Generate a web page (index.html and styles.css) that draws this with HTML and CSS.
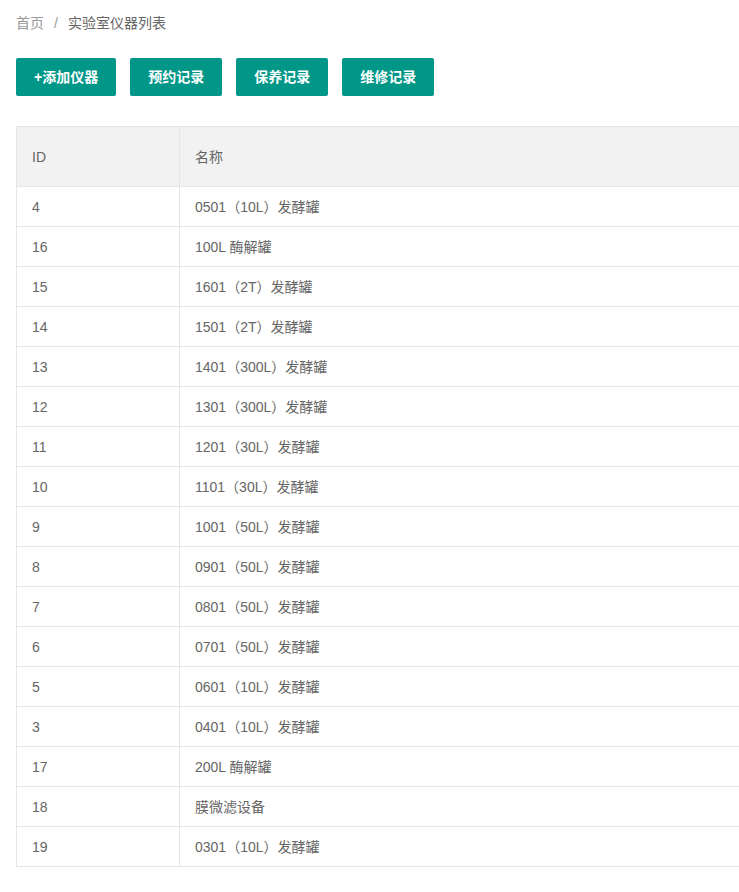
FILE: index.html
```html
<!DOCTYPE html>
<html lang="zh-CN">
<head>
<meta charset="utf-8">
<title>实验室仪器列表</title>
<link rel="stylesheet" href="styles.css">
</head>
<body>
<div class="page">
  <div class="breadcrumb">
    <a class="crumb">首页</a><span class="sep">/</span><span class="crumb current">实验室仪器列表</span>
  </div>
  <div class="toolbar">
    <button class="btn">+添加仪器</button>
    <button class="btn">预约记录</button>
    <button class="btn">保养记录</button>
    <button class="btn">维修记录</button>
  </div>
  <div class="table-wrap">
    <table class="grid">
      <colgroup><col class="c-id"><col class="c-name"></colgroup>
      <thead>
        <tr><th>ID</th><th>名称</th></tr>
      </thead>
      <tbody>
        <tr><td>4</td><td>0501（10L）发酵罐</td></tr>
        <tr><td>16</td><td>100L 酶解罐</td></tr>
        <tr><td>15</td><td>1601（2T）发酵罐</td></tr>
        <tr><td>14</td><td>1501（2T）发酵罐</td></tr>
        <tr><td>13</td><td>1401（300L）发酵罐</td></tr>
        <tr><td>12</td><td>1301（300L）发酵罐</td></tr>
        <tr><td>11</td><td>1201（30L）发酵罐</td></tr>
        <tr><td>10</td><td>1101（30L）发酵罐</td></tr>
        <tr><td>9</td><td>1001（50L）发酵罐</td></tr>
        <tr><td>8</td><td>0901（50L）发酵罐</td></tr>
        <tr><td>7</td><td>0801（50L）发酵罐</td></tr>
        <tr><td>6</td><td>0701（50L）发酵罐</td></tr>
        <tr><td>5</td><td>0601（10L）发酵罐</td></tr>
        <tr><td>3</td><td>0401（10L）发酵罐</td></tr>
        <tr><td>17</td><td>200L 酶解罐</td></tr>
        <tr><td>18</td><td>膜微滤设备</td></tr>
        <tr><td>19</td><td>0301（10L）发酵罐</td></tr>
      </tbody>
    </table>
  </div>
</div>
</body>
</html>
```
FILE: styles.css
```css
html, body {
  margin: 0;
  padding: 0;
  background: #fff;
  overflow: hidden;
}
body {
  font-family: "Liberation Sans", "Noto Sans CJK SC", sans-serif;
  font-size: 14px;
  color: #666;
}
.page {
  padding: 15px 0 0 16px;
}
.breadcrumb {
  line-height: 16px;
  height: 16px;
}
.crumb {
  color: #999;
}
.crumb.current {
  color: #666;
}
.sep {
  color: #999;
  margin: 0 10px;
}
.toolbar {
  display: flex;
  gap: 14px;
  margin-top: 27px;
}
.btn {
  height: 38px;
  padding: 0 18px;
  border: none;
  border-radius: 2px;
  background: #009688;
  color: #fff;
  font-family: inherit;
  font-size: 14px;
  font-weight: bold;
  line-height: 38px;
  white-space: nowrap;
  cursor: pointer;
}
.table-wrap {
  margin-top: 30px;
  overflow: hidden;
}
.grid {
  width: 1000px;
  border-collapse: collapse;
  table-layout: fixed;
}
.c-id { width: 163px; }
.grid th, .grid td {
  border: 1px solid #e6e6e6;
  padding: 11px 15px 9px;
  line-height: 19px;
  text-align: left;
  font-weight: normal;
  color: #666;
}
.grid th {
  background: #f2f2f2;
  padding: 21px 15px 19px;
}
```
